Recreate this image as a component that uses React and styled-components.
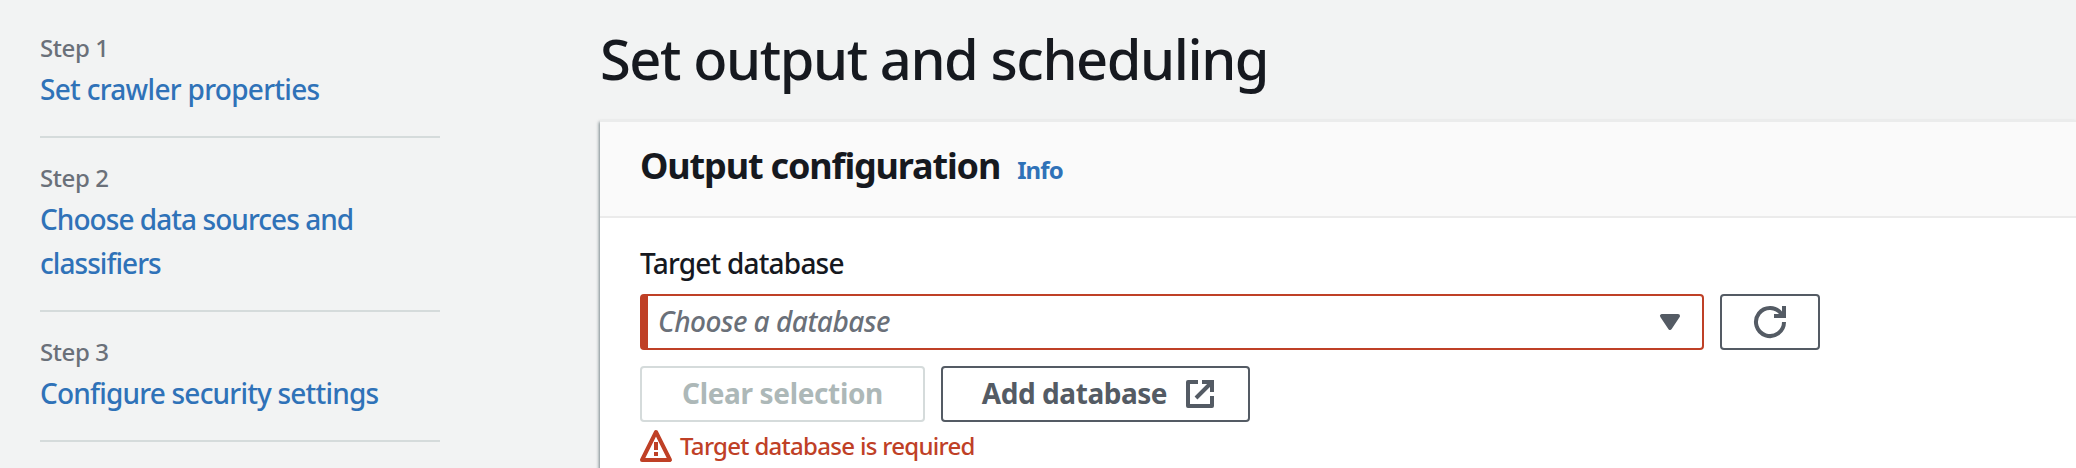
import React from "react";
import styled, { createGlobalStyle } from "styled-components";

const Global = createGlobalStyle`
  * { box-sizing: border-box; }
  html, body { margin: 0; background: #f2f3f3; }
  body {
    height: 468px;
    overflow: hidden;
    font-family: "Noto Sans", "Open Sans", sans-serif;
    font-size: 28px;
    font-weight: 500;
    line-height: 44px;
    color: #16191f;
  }
`;

const Page = styled.div`
  display: flex;
  height: 468px;
  padding-left: 40px;
  overflow: hidden;
`;

const Steps = styled.ol`
  list-style: none;
  flex: none;
  width: 400px;
  margin: 8px 160px 0 0;
  padding: 0;
`;

const Step = styled.li`
  padding: 20px 0 25px;
  border-bottom: 2px solid #d5dbdb;
`;

const StepLabel = styled.div`
  font-size: 24px;
  line-height: 39px;
  color: #6a7079;
  letter-spacing: -0.4px;
`;

const StepLink = styled.a`
  display: block;
  color: #2f72b8;
  letter-spacing: ${(p) => p.$track || "-0.7px"};
`;

const Main = styled.main`
  flex: 1;
  min-width: 0;
`;

const Title = styled.h1`
  margin: 0;
  height: 120px;
  padding-top: 20px;
  font-size: 56px;
  line-height: 76px;
  font-weight: 500;
  letter-spacing: -1.43px;
  white-space: nowrap;
`;

const Panel = styled.section`
  height: 400px;
  background: #fff;
  border-top: 2px solid #ebecec;
  box-shadow: -1px 2px 3px rgba(0, 28, 36, 0.5);
`;

const PanelHeader = styled.header`
  display: flex;
  align-items: baseline;
  gap: 17px;
  height: 96px;
  padding: 20px 40px 0;
  background: #fafafa;
  border-bottom: 2px solid #ebebeb;
`;

const Heading = styled.h2`
  margin: 0;
  font-size: 36px;
  line-height: 48px;
  font-weight: 700;
  letter-spacing: -1.15px;
`;

const InfoLink = styled.a`
  font-size: 24px;
  font-weight: 700;
  color: #2f72b8;
  letter-spacing: -0.9px;
`;

const PanelBody = styled.div`
  padding: 23px 40px;
`;

const FieldLabel = styled.label`
  display: block;
  height: 53px;
  letter-spacing: -0.8px;
`;

const Row = styled.div`
  display: flex;
  gap: 16px;
  margin-bottom: ${(p) => p.$after || 0}px;
`;

const Select = styled.div`
  display: flex;
  align-items: center;
  justify-content: space-between;
  width: 1064px;
  height: 56px;
  padding: 0 16px 0 10px;
  border: 2px solid #bf4026;
  border-left-width: 8px;
  border-radius: 4px;
`;

const Placeholder = styled.span`
  padding-bottom: 2px;
  font-style: italic;
  color: #6a7079;
  letter-spacing: -0.5px;
`;

const Button = styled.button`
  display: flex;
  align-items: center;
  justify-content: center;
  gap: 17px;
  flex: none;
  width: ${(p) => p.$width}px;
  height: 56px;
  padding: 0 0 0 ${(p) => p.$inset || 0}px;
  border: 2px solid ${(p) => (p.disabled ? "#d5dbdb" : "#545b64")};
  border-radius: 4px;
  background: #fff;
  color: ${(p) => (p.disabled ? "#adb8b8" : "#545b64")};
  font: 700 28px/44px "Noto Sans", "Open Sans", sans-serif;
  letter-spacing: ${(p) => p.$track || "0"};
`;

const ButtonText = styled.span`
  padding-bottom: 2px;
`;

const ErrorRow = styled.div`
  display: flex;
  gap: 8px;
  color: #bf4026;
  font-size: 24px;
  line-height: 32px;
  letter-spacing: -0.7px;
`;

const Icon = styled.svg.attrs({ viewBox: "0 0 16 16" })`
  display: block;
  flex: none;
  width: 32px;
  height: 32px;
  overflow: visible;
  fill: none;
  stroke: currentColor;
  stroke-width: 2;
  color: ${(p) => p.$color || "inherit"};
`;

export default function App() {
  return (
    <>
      <Global />
      <Page>
        <Steps>
          <Step>
            <StepLabel>Step 1</StepLabel>
            <StepLink>Set crawler properties</StepLink>
          </Step>
          <Step>
            <StepLabel>Step 2</StepLabel>
            <StepLink $track="-0.95px">
              Choose data sources and
              <br />
              classifiers
            </StepLink>
          </Step>
          <Step>
            <StepLabel>Step 3</StepLabel>
            <StepLink $track="-0.8px">Configure security settings</StepLink>
          </Step>
        </Steps>
        <Main>
          <Title>Set output and scheduling</Title>
          <Panel>
            <PanelHeader>
              <Heading>Output configuration</Heading>
              <InfoLink>Info</InfoLink>
            </PanelHeader>
            <PanelBody>
              <FieldLabel>Target database</FieldLabel>
              <Row $after={16}>
                <Select>
                  <Placeholder>Choose a database</Placeholder>
                  <Icon $color="#545b64">
                    <path d="M4 5h8l-4 6z" fill="currentColor" strokeLinejoin="round" />
                  </Icon>
                </Select>
                <Button $width={100} aria-label="Refresh">
                  <Icon>
                    <path d="M15 8a7 7 0 1 1-1.2-3.9" />
                    <path d="M15 0v5h-5" />
                  </Icon>
                </Button>
              </Row>
              <Row $after={8}>
                <Button $width={285} $track="-0.35px" disabled>
                  <ButtonText>Clear selection</ButtonText>
                </Button>
                <Button $width={309} $track="-0.45px" $inset={7}>
                  <ButtonText>Add database</ButtonText>
                  <Icon>
                    <path d="M7 2H2v12h12V9" strokeLinejoin="round" />
                    <path d="M9 2h5v5M14 2l-8 8" />
                  </Icon>
                </Button>
              </Row>
              <ErrorRow>
                <Icon>
                  <path d="M8 1l7 14H1z" strokeLinejoin="round" />
                  <path d="M8 6v4M8 11v2" />
                </Icon>
                <span>Target database is required</span>
              </ErrorRow>
            </PanelBody>
          </Panel>
        </Main>
      </Page>
    </>
  );
}
